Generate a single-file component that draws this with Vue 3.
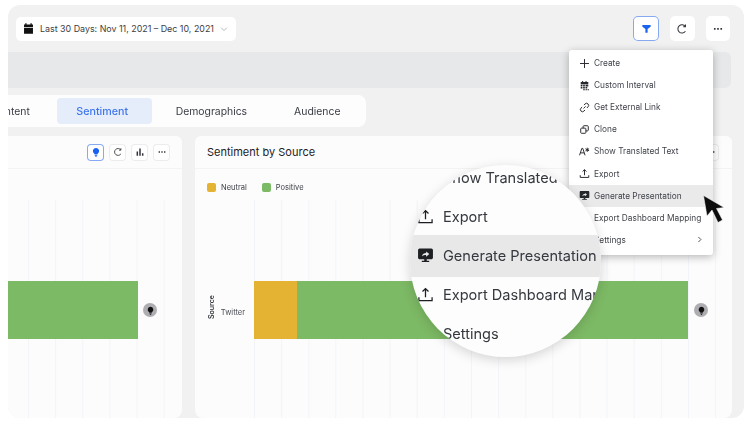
<script setup>
const icons = {
  calendar: { fill: true, d: "M4 1.500h1.600V3h4.800V1.500H12V3h1.500v3h-11V3H4zM2.500 7h11v7.500h-11z" },
  chevron: { d: "M3.500 6l4.500 4.500L12.500 6" },
  filter: { fill: true, d: "M2 3h12v2.400L9.600 8.600V14H6.400V8.600L2 5.400z" },
  refresh: { d: "M12.400 4.600A5.500 5.500 0 1 0 12.600 11M12.600 2v3h-3" },
  dots: { fill: true, d: "M2.600 6.800h2.200V9H2.600zM6.900 6.800h2.200V9H6.900zM11.200 6.800h2.200V9h-2.200z" },
  bulb: { fill: true, d: "M8 1.500a5 5 0 0 1 3 9c-.5.4-.8.8-.8 1.300H5.800c0-.5-.3-.9-.8-1.300a5 5 0 0 1 3-9zM6 12.800h4v1H6zM6.800 14.400h2.400v1H6.800z" },
  bars: { fill: true, d: "M2.500 7h2.400v7H2.500zM6.800 2.500h2.400V14H6.800zM11.100 10h2.400v4h-2.400z" },
  plus: { d: "M8 1.500v13M1.500 8h13" },
  interval: { fill: true, d: "M4.500 1.500H6V3h3.500V1.500H11V3h2.500v3h-11V3h2zM2.500 7H5v2.300H2.500zM6 7h2.500v2.300H6zM9.500 7h4v2.300h-4zM2.500 10.200H5v2.300H2.500zM6 10.200h2.500v2.300H6zM9.500 10.200H12v2.300H9.500zM6 13.300h2.500v1.700H6zM9.500 13.300H12v1.700H9.500zM12.800 13.300h1.700v1.700h-1.700z" },
  link: { d: "M6.600 9.400l3-3M7.200 4.400l1.600-1.600a3 3 0 0 1 4.300 4.300l-1.600 1.600M8.800 11.600l-1.600 1.600a3 3 0 0 1-4.300-4.300l1.600-1.600" },
  clone: { d: "M6 6V3.600c0-.6.5-1.100 1.100-1.100h5.300c.6 0 1.100.5 1.100 1.100v5.300c0 .6-.5 1.100-1.100 1.100H10M3.600 6h5.300c.6 0 1.100.5 1.100 1.100v5.300c0 .6-.5 1.100-1.100 1.100H3.600c-.6 0-1.100-.5-1.100-1.100V7.100c0-.6.5-1.100 1.100-1.100z" },
  translate: { d: "M.8 13.500l3.300-10h1.400l3.300 10M2.200 10h5.200M12 2.500v6M9.400 4l5.200 3M14.600 4L9.400 7" },
  upload: { d: "M8 10.500V2.500M5.200 5.200L8 2.400l2.800 2.800M1.800 10.500v3.200h12.400v-3.200" },
  screen: { fill: true, d: "M2.500 1.500h11c.8 0 1.500.7 1.500 1.500v7c0 .8-.7 1.500-1.500 1.500H9.200v1.500h2.300v1.200h-7V13h2.300v-1.500H2.500C1.700 11.500 1 10.800 1 10V3c0-.8.7-1.500 1.500-1.500zM4.600 8.900c.6-2.300 2.100-3.200 4-3.200V4.200l3 2.500-3 2.500V7.600c-1.500 0-3 .2-4 1.300z" },
  next: { d: "M6 3.500L10.500 8 6 12.500" },
};

const menu = [
  { label: "Create", icon: "plus" },
  { label: "Custom Interval", icon: "interval" },
  { label: "Get External Link", icon: "link" },
  { label: "Clone", icon: "clone" },
  { label: "Show Translated Text", icon: "translate" },
  { label: "Export", icon: "upload" },
  { label: "Generate Presentation", icon: "screen", active: true },
  { label: "Export Dashboard Mapping", icon: "upload" },
  { label: "Settings", icon: "next", arrow: true },
];

const lens = [
  { label: "Show Translated Text", icon: "translate" },
  { label: "Export", icon: "upload" },
  { label: "Generate Presentation", icon: "screen", active: true },
  { label: "Export Dashboard Mapping", icon: "upload" },
  { label: "Settings", icon: "next" },
];

const tabs = ["Content", "Sentiment", "Demographics", "Audience"];
</script>

<template>
  <div class="stage">
    <div class="window">
      <div class="toolbar">
        <button class="date">
          <svg class="ic date-ic" viewBox="0 0 16 16"><path :d="icons.calendar.d" fill="currentColor" /></svg>
          <span>Last 30 Days: Nov 11, 2021 – Dec 10, 2021</span>
          <svg class="ic chev" viewBox="0 0 16 16"><path :d="icons.chevron.d" class="line" /></svg>
        </button>
        <div class="actions">
          <button class="tool on">
            <svg class="ic" viewBox="0 0 16 16"><path :d="icons.filter.d" fill="currentColor" /></svg>
          </button>
          <button class="tool">
            <svg class="ic" viewBox="0 0 16 16"><path :d="icons.refresh.d" class="line" /></svg>
          </button>
          <button class="tool">
            <svg class="ic" viewBox="0 0 16 16"><path :d="icons.dots.d" fill="currentColor" /></svg>
          </button>
        </div>
      </div>

      <div class="band"></div>

      <div class="tabs">
        <div v-for="t in tabs" :key="t" class="tab" :class="{ active: t === 'Sentiment' }">{{ t }}</div>
      </div>

      <div class="cards">
        <section class="card left">
          <header class="head">
            <button class="mini on">
              <svg class="ic" viewBox="0 0 16 16"><path :d="icons.bulb.d" fill="currentColor" /></svg>
            </button>
            <button class="mini">
              <svg class="ic" viewBox="0 0 16 16"><path :d="icons.refresh.d" class="line" /></svg>
            </button>
            <button class="mini">
              <svg class="ic" viewBox="0 0 16 16"><path :d="icons.bars.d" fill="currentColor" /></svg>
            </button>
            <button class="mini">
              <svg class="ic" viewBox="0 0 16 16"><path :d="icons.dots.d" fill="currentColor" /></svg>
            </button>
          </header>
          <div class="legend"></div>
          <div class="plot">
            <div class="row">
              <div class="seg pos" style="width: 130px"></div>
              <span class="dot"><svg viewBox="0 0 16 16"><path :d="icons.bulb.d" fill="#111" /></svg></span>
            </div>
          </div>
        </section>

        <section class="card right">
          <header class="head">
            <h2>Sentiment by Source</h2>
            <button class="mini">
              <svg class="ic" viewBox="0 0 16 16"><path :d="icons.dots.d" fill="currentColor" /></svg>
            </button>
          </header>
          <div class="legend">
            <span class="key"><i class="swatch neu"></i>Neutral</span>
            <span class="key"><i class="swatch pos"></i>Positive</span>
          </div>
          <div class="chart">
            <div class="axis">
              <span class="axis-title">Source</span>
              <span class="axis-label">Twitter</span>
            </div>
            <div class="plot grow">
              <div class="row">
                <div class="seg neu" style="width: 43px"></div>
                <div class="seg pos" style="width: 391px"></div>
                <span class="dot"><svg viewBox="0 0 16 16"><path :d="icons.bulb.d" fill="#111" /></svg></span>
              </div>
            </div>
          </div>
        </section>
      </div>

      <div class="menu">
        <div v-for="m in menu" :key="m.label" class="item" :class="{ active: m.active }">
          <svg class="ic item-ic" viewBox="0 0 16 16">
            <path v-if="icons[m.icon].fill" :d="icons[m.icon].d" fill="currentColor" fill-rule="evenodd" />
            <path v-else :d="icons[m.icon].d" class="line" />
          </svg>
          <span class="item-text">{{ m.label }}</span>
          <svg v-if="m.arrow" class="ic arrow" viewBox="0 0 16 16"><path :d="icons.next.d" class="line" /></svg>
        </div>
      </div>

      <div class="lens">
        <div class="lens-list">
          <div v-for="l in lens" :key="l.label" class="lens-row" :class="{ active: l.active }">
            <svg class="ic lens-ic" viewBox="0 0 16 16">
              <path v-if="icons[l.icon].fill" :d="icons[l.icon].d" fill="currentColor" fill-rule="evenodd" />
              <path v-else :d="icons[l.icon].d" class="line thin" />
            </svg>
            <span>{{ l.label }}</span>
          </div>
        </div>
      </div>

      <svg class="cursor" viewBox="0 0 22 30">
        <path d="M.5.5L4 21l5-6 6 12.500 4.500-2.500-6-11.500 7.500-1z" fill="#0c0c0c" stroke="#fff" stroke-width=".5" />
      </svg>
    </div>
  </div>
</template>

<style>
html,
body {
  margin: 0;
  background: #fff;
}
</style>

<style scoped>
.stage {
  width: 750px;
  height: 428px;
  box-sizing: border-box;
  padding: 5px 6px 10px 8px;
  overflow: hidden;
  font-family: Inter, "Liberation Sans", sans-serif;
  background: #fff;
}

.window {
  position: relative;
  height: 100%;
  display: flex;
  flex-direction: column;
  overflow: hidden;
  border-radius: 12px;
  background: #f1f1f1;
  filter: blur(0.35px);
}

button {
  font-family: inherit;
  padding: 0;
  border: 0;
  display: flex;
  align-items: center;
  justify-content: center;
  background: #fff;
}

.ic {
  display: block;
  width: 12px;
  height: 12px;
}

.line {
  fill: none;
  stroke: currentColor;
  stroke-width: 1.4;
}

.line.thin {
  stroke-width: 1.2;
}

.toolbar {
  height: 47px;
  flex: none;
  display: flex;
  align-items: center;
  justify-content: space-between;
  padding: 0 14px 0 8px;
}

.date {
  width: 220px;
  height: 24px;
  justify-content: flex-start;
  border-radius: 5px;
  padding-left: 5.500px;
  color: #3b3e45;
  font-size: 8.900px;
  white-space: nowrap;
}

.date-ic {
  width: 13px;
  height: 13px;
  margin-right: 5.500px;
  color: #111;
}

.chev {
  margin-left: 5.500px;
  width: 10px;
  height: 10px;
  color: #a9abb2;
}

.actions {
  display: flex;
  align-items: center;
  gap: 11px;
}

.tool {
  width: 24.500px;
  height: 25px;
  border-radius: 5px;
  color: #33363c;
}

.tool.on {
  width: 26px;
}

.tool.on .ic {
  width: 11px;
  height: 11px;
}

.tool.on,
.mini.on {
  color: #1c62f0;
  box-shadow: inset 0 0 0 1px #86a9f2;
}

.band {
  height: 36px;
  flex: none;
  margin-right: 13px;
  border-radius: 0 6px 6px 0;
  background: #e7e8e9;
}

.tabs {
  width: 358px;
  height: 32px;
  flex: none;
  box-sizing: border-box;
  margin-top: 7px;
  padding: 3px 0;
  display: flex;
  overflow: hidden;
  border-radius: 0 8px 8px 0;
  background: #fdfdfd;
  font-size: 10.400px;
  color: #393c43;
}

.tab {
  display: flex;
  align-items: center;
  padding: 0 23.500px;
  border-radius: 4px;
  white-space: nowrap;
}

.tab:first-child {
  margin-left: -17px;
  padding: 0 27px 0 0;
}

.tab.active {
  padding: 0 24px 0 19.500px;
  color: #3f76ea;
  font-size: 10.700px;
  font-weight: 500;
  background: #e5edfb;
}

.cards {
  flex: 1;
  min-height: 0;
  margin-top: 9px;
  display: flex;
  gap: 13px;
  padding-right: 12px;
}

.card {
  display: flex;
  flex-direction: column;
  border-radius: 6px 6px 8px 8px;
  background: #fcfcfc;
}

.left {
  width: 174px;
  flex: none;
  border-top-left-radius: 0;
}

.right {
  flex: 1;
}

.head {
  height: 33px;
  flex: none;
  box-sizing: border-box;
  display: flex;
  align-items: center;
  justify-content: flex-end;
  gap: 5px;
  padding: 0 12px;
  border-bottom: 1px solid #f3f3f4;
}

.right .head {
  justify-content: space-between;
  padding: 0 13px 0 12px;
}

.head h2 {
  margin: 0;
  font-size: 11px;
  font-weight: 400;
  color: #1f2125;
}

.mini {
  width: 17px;
  height: 17px;
  border-radius: 4px;
  color: #33363c;
  box-shadow: inset 0 0 0 1px #ececee;
}

.mini .ic {
  width: 10px;
  height: 10px;
}

.legend {
  height: 31px;
  flex: none;
  display: flex;
  align-items: center;
  gap: 15px;
  padding: 5px 12px 0;
  box-sizing: border-box;
  font-size: 7.500px;
  color: #3b3e45;
}

.key {
  display: flex;
  align-items: center;
  gap: 5px;
}

.swatch {
  width: 9px;
  height: 9px;
  border-radius: 2px;
}

.neu {
  background: #e4b334;
}

.pos {
  background: #7dba65;
}

.chart {
  flex: 1;
  display: flex;
}

.axis {
  width: 59px;
  flex: none;
  box-sizing: border-box;
  padding: 78px 9px 0 12px;
  display: flex;
  align-items: flex-start;
  justify-content: space-between;
}

.axis-title {
  height: 58px;
  writing-mode: vertical-rl;
  transform: rotate(180deg);
  text-align: center;
  font-size: 7px;
  font-weight: 600;
  color: #33363c;
}

.axis-label {
  margin-top: 6px;
  line-height: 58px;
  font-size: 7.500px;
  color: #4a4d55;
}

.plot {
  flex: 1;
  box-sizing: border-box;
  padding-top: 81px;
  background: linear-gradient(to right, #f3f4f8 1px, transparent 1px) 0 0 / 27.130px 100% repeat-x;
}

.left .plot {
  background-position: 20px 0;
}

.row {
  display: flex;
  align-items: center;
}

.seg {
  height: 58px;
}

.dot {
  width: 14px;
  height: 14px;
  margin-left: 5px;
  display: flex;
  align-items: center;
  justify-content: center;
  border-radius: 50%;
  background: #aeaeb2;
}

.right .dot {
  margin-left: 6px;
}

.dot svg {
  width: 9px;
  height: 9px;
}

.menu {
  position: absolute;
  left: 561px;
  top: 44.500px;
  width: 144px;
  box-sizing: border-box;
  padding: 2.500px 0 4.500px;
  border-radius: 3px;
  background: #fff;
  box-shadow: 0 2px 8px rgba(0, 0, 0, 0.28);
  font-size: 8.300px;
  color: #41444b;
}

.item {
  height: 22.100px;
  display: flex;
  align-items: center;
  padding: 0 9px 0 10px;
}

.item.active {
  background: #eaeaeb;
}

.item-ic {
  width: 11px;
  height: 11px;
  margin-right: 4px;
  color: #26282d;
}

.item-text {
  flex: 1;
  white-space: nowrap;
}

.arrow {
  width: 9px;
  height: 9px;
  color: #26282d;
}

.lens {
  position: absolute;
  left: 402px;
  top: 160px;
  width: 191px;
  height: 192px;
  overflow: hidden;
  border-radius: 50%;
  background: #fdfdfd;
  box-shadow: 0 3px 12px rgba(0, 0, 0, 0.16);
  color: #35383e;
  font-size: 14.550px;
}

.lens-list {
  margin-top: -7px;
}

.lens-row {
  height: 39px;
  display: flex;
  align-items: center;
  gap: 10px;
  padding-left: 7px;
  white-space: nowrap;
}

.lens-row.active {
  height: 42px;
  margin: -1.500px 0;
  background: #e8e8e9;
}

.lens-ic {
  width: 17px;
  height: 17px;
  flex: none;
  margin-right: -1px;
  color: #1d1f23;
}

.cursor {
  position: absolute;
  left: 695px;
  top: 190px;
  width: 22px;
  height: 30px;
}
</style>
